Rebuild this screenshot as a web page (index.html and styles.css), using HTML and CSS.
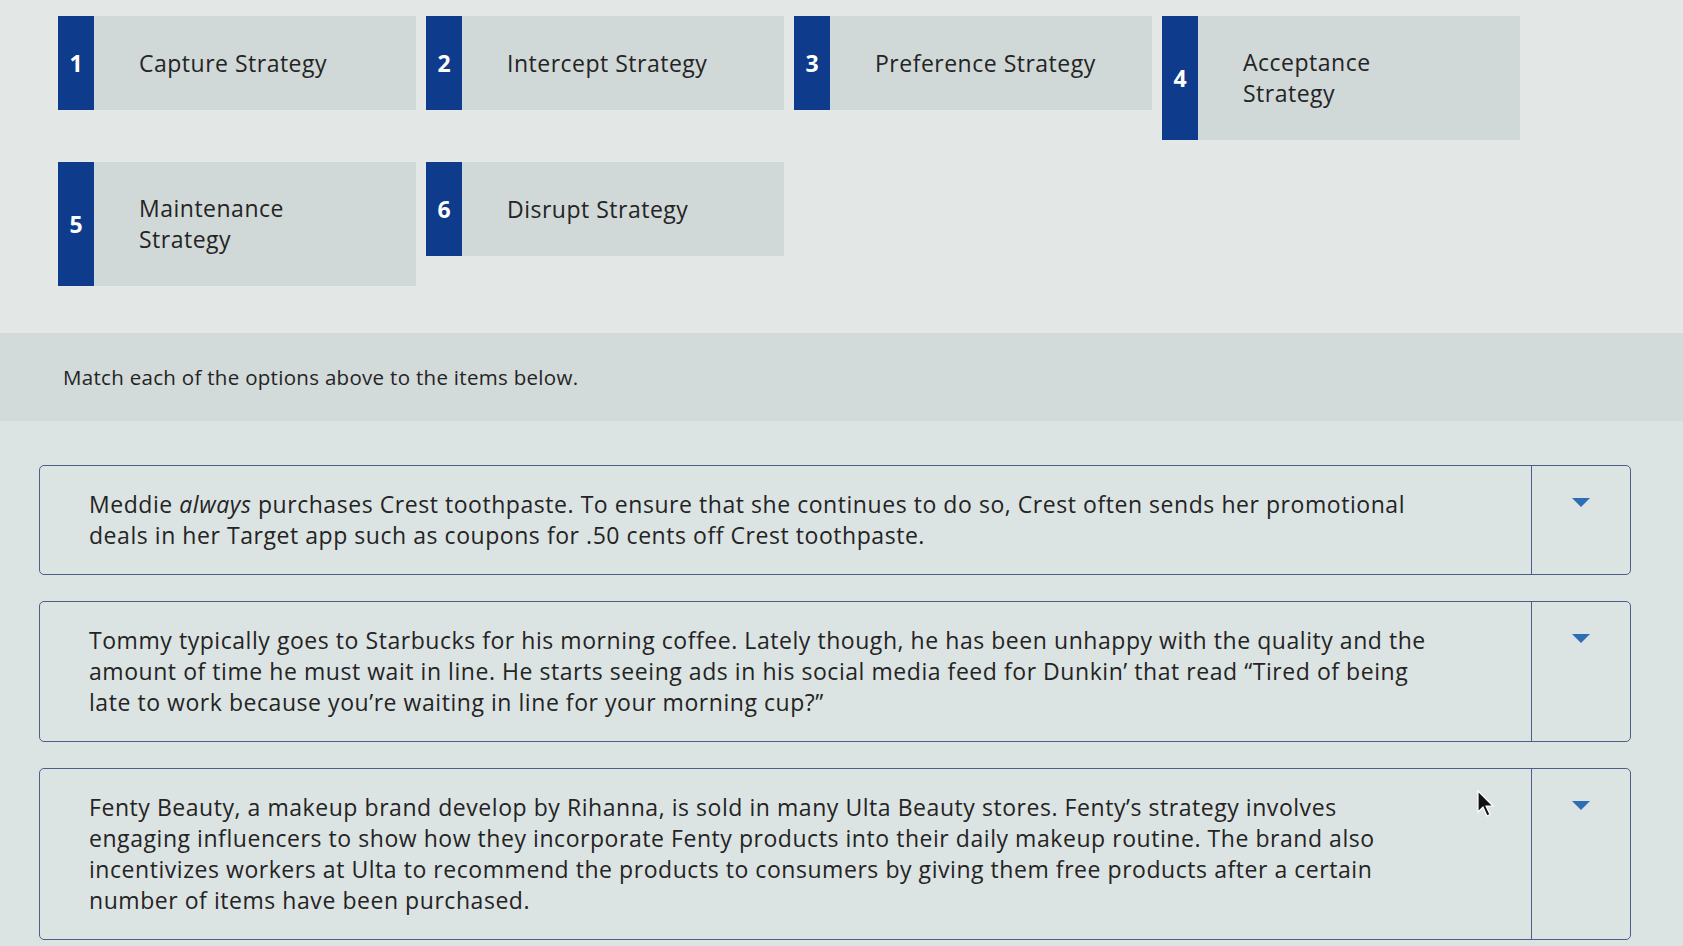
FILE: index.html
```html
<!DOCTYPE html>
<html lang="en">
<head>
  <meta charset="UTF-8" />
  <title>Matching</title>
  <link rel="stylesheet" href="styles.css">
</head>
<body>

  <div class="options">
    <div class="option"><div class="num">1</div><div class="label"><span>Capture Strategy</span></div></div>
    <div class="option"><div class="num">2</div><div class="label"><span>Intercept Strategy</span></div></div>
    <div class="option"><div class="num">3</div><div class="label"><span>Preference Strategy</span></div></div>
    <div class="option"><div class="num">4</div><div class="label"><span>Acceptance<br>Strategy</span></div></div>
    <div class="option"><div class="num">5</div><div class="label"><span>Maintenance<br>Strategy</span></div></div>
    <div class="option"><div class="num">6</div><div class="label"><span>Disrupt Strategy</span></div></div>
  </div>

  <div class="prompt">Match each of the options above to the items below.</div>

  <div class="items">
    <div class="item">
      <div class="text">Meddie <em>always</em> purchases Crest toothpaste. To ensure that she continues to do so, Crest often sends her promotional<br>deals in her Target app such as coupons for .50 cents off Crest toothpaste.</div>
      <div class="select"><span class="caret"></span></div>
    </div>
    <div class="item">
      <div class="text">Tommy typically goes to Starbucks for his morning coffee. Lately though, he has been unhappy with the quality and the<br>amount of time he must wait in line. He starts seeing ads in his social media feed for Dunkin’ that read “Tired of being<br>late to work because you’re waiting in line for your morning cup?”</div>
      <div class="select"><span class="caret"></span></div>
    </div>
    <div class="item">
      <div class="text">Fenty Beauty, a makeup brand develop by Rihanna, is sold in many Ulta Beauty stores. Fenty’s strategy involves<br>engaging influencers to show how they incorporate Fenty products into their daily makeup routine. The brand also<br>incentivizes workers at Ulta to recommend the products to consumers by giving them free products after a certain<br>number of items have been purchased.</div>
      <div class="select"><span class="caret"></span></div>
    </div>
  </div>

  <svg class="cursor" width="18" height="28" viewBox="0 0 18 28">
    <path d="M1 1 L1 22 L6 17 L10 26 L13 24.5 L9 16 L16 16 Z" fill="#111" stroke="#fff" stroke-width="1.2"/>
  </svg>

</body>
</html>
```

FILE: styles.css
```css
body {
  margin: 0;
  font-family: "Open Sans", Lato, sans-serif;
  color: #242424;
  background-color: #dce3e3;
  position: relative;
  overflow: hidden;
  height: 946px;
}

.options {
  display: grid;
  grid-template-columns: repeat(4, 358px);
  align-content: start;
  align-items: start;
  column-gap: 10px;
  row-gap: 22px;
  padding: 16px 0 0 58px;
  height: 333px;
  box-sizing: border-box;
  background-color: #e3e8e7;
}

.option {
  display: flex;
  min-height: 94px;
  background-color: #d1d8d8;
}

.option .num {
  width: 36px;
  flex-shrink: 0;
  background-color: #0e3b8c;
  color: #fff;
  font-weight: bold;
  font-size: 23px;
  display: flex;
  align-items: center;
  justify-content: center;
}

.option .label {
  display: flex;
  align-items: center;
  padding: 31px 20px 31px 45px;
  font-size: 23px;
  letter-spacing: 0.5px;
  line-height: 31px;
}

.prompt {
  height: 88px;
  padding-left: 63px;
  display: flex;
  align-items: center;
  font-size: 20.5px;
  letter-spacing: 0.3px;
  background-color: #d3dada;
}

.items {
  display: flex;
  flex-direction: column;
  gap: 26px;
  padding: 44px 52px 0 39px;
}

.item {
  display: flex;
  border: 1.5px solid #4c5f86;
  border-radius: 5px;
}

.item .text {
  flex: 1;
  padding: 23px 20px 23px 49px;
  font-size: 23px;
  letter-spacing: 0.55px;
  line-height: 31px;
  white-space: nowrap;
}

.item .select {
  width: 98px;
  flex-shrink: 0;
  border-left: 1.5px solid #4c5f86;
  display: flex;
  justify-content: center;
  padding-top: 32px;
}

.caret {
  width: 0;
  height: 0;
  border-left: 9px solid transparent;
  border-right: 9px solid transparent;
  border-top: 9px solid #2f6db5;
}

.cursor {
  position: absolute;
  left: 1477px;
  top: 790px;
}
```
